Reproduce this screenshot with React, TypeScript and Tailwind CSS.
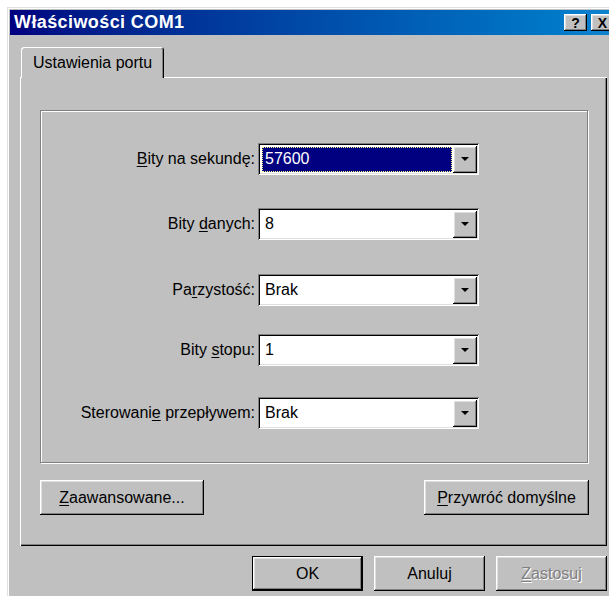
import type { ReactNode } from 'react'

// bevels in the classic 3D look
const raised =
  'shadow-[inset_-1px_-1px_#000,inset_1px_1px_#fff,inset_-2px_-2px_#808080,inset_2px_2px_#dfdfdf]'
const sunken =
  'shadow-[inset_1px_1px_#808080,inset_-1px_-1px_#fff,inset_2px_2px_#000,inset_-2px_-2px_#dfdfdf]'

const font = { fontFamily: '"Liberation Sans", Arial, sans-serif' }

function Key({ children }: { children: ReactNode }) {
  return <span className="underline underline-offset-2 decoration-1">{children}</span>
}

function Arrow() {
  return (
    <svg width="8" height="4" viewBox="0 0 8 4">
      <path d="M0 0h8L4 4z" fill="#000" />
    </svg>
  )
}

function Combo({ value, selected }: { value: string; selected?: boolean }) {
  return (
    <div className={`relative h-[32px] w-[221px] bg-white ${sunken} flex items-center p-[2px]`}>
      <div className="flex-1 h-full flex items-center pl-[2px] pr-[1px]">
        {selected ? (
          <div className="h-[25px] w-full bg-[#000080] border border-dotted border-[#ffff80] text-white flex items-center pl-[2px]">
            {value}
          </div>
        ) : (
          <span className="pl-[3px] text-black">{value}</span>
        )}
      </div>
      <div className={`w-[24px] h-[27px] bg-[#c0c0c0] ${raised} flex items-center justify-center`}>
        <Arrow />
      </div>
    </div>
  )
}

function Row({ label, children, mt }: { label: ReactNode; children: ReactNode; mt: string }) {
  return (
    <div className={`flex items-center ${mt}`}>
      <div className="w-[217px] text-right pr-[3px] text-black">{label}</div>
      {children}
    </div>
  )
}

function Button({
  children,
  w,
  isDefault,
  disabled,
}: {
  children: ReactNode
  w: string
  isDefault?: boolean
  disabled?: boolean
}) {
  const frame = isDefault
    ? 'shadow-[inset_0_0_0_1px_#000,inset_-2px_-2px_#000,inset_2px_2px_#fff,inset_-3px_-3px_#808080,inset_3px_3px_#dfdfdf]'
    : raised
  return (
    <div
      className={`${w} h-[35px] bg-[#c0c0c0] ${frame} flex items-center justify-center ${
        disabled ? 'text-[#808080] [text-shadow:1px_1px_#fff]' : 'text-black'
      }`}
    >
      {children}
    </div>
  )
}

export default function App() {
  return (
    <div className="w-[609px] h-[596px] overflow-hidden bg-white pl-[7px] pt-[7px] text-[16px]" style={font}>
      <div className="w-[613px] h-[600px] bg-[#c0c0c0] shadow-[inset_1px_1px_#dfdfdf,inset_2px_2px_#fff] p-[3px] flex flex-col">
        {/* title bar */}
        <div className="h-[25px] flex items-center bg-linear-to-r from-[#000080] to-[#1084d0] pl-[4px] pr-[3px]">
          <span className="text-white font-bold text-[18px] tracking-[0.4px] flex-1">Właściwości COM1</span>
          <div className={`w-[23px] h-[17px] bg-[#c0c0c0] ${raised} flex items-center justify-center font-bold text-[14px] leading-none text-black`}>
            ?
          </div>
          <div className={`ml-[4px] w-[23px] h-[17px] bg-[#c0c0c0] ${raised} flex items-center justify-center font-bold text-[14px] leading-none text-black`}>
            X
          </div>
        </div>

        <div className="pl-[10px] pt-[12px] w-[597px]">
          {/* tab strip */}
          <div className="flex">
            <div className="relative z-10 ml-[1px] -mb-[1px] h-[31px] w-[143px] rounded-t-[3px] bg-[#c0c0c0] shadow-[inset_1px_1px_#fff,inset_-1px_0_#000,inset_-2px_0_#808080] flex items-center pl-[12px] text-black">
              Ustawienia portu
            </div>
          </div>

          {/* tab page */}
          <div className="h-[469px] w-[587px] bg-[#c0c0c0] shadow-[inset_1px_1px_#fff,inset_-1px_-1px_#000,inset_-2px_-2px_#808080] px-[20px] pt-[33px] flex flex-col">
            <div className="h-[353px] w-[548px] border border-[#808080] shadow-[inset_1px_1px_#fff,1px_1px_#fff] flex flex-col">
              <Row mt="mt-[32px]" label={<><Key>B</Key>ity na sekundę:</>}>
                <Combo value="57600" selected />
              </Row>
              <Row mt="mt-[33px]" label={<>Bity <Key>d</Key>anych:</>}>
                <Combo value="8" />
              </Row>
              <Row mt="mt-[34px]" label={<>Pa<Key>r</Key>zystość:</>}>
                <Combo value="Brak" />
              </Row>
              <Row mt="mt-[28px]" label={<>Bity <Key>s</Key>topu:</>}>
                <Combo value="1" />
              </Row>
              <Row mt="mt-[31px]" label={<>Sterowani<Key>e</Key> przepływem:</>}>
                <Combo value="Brak" />
              </Row>
            </div>

            <div className="mt-[17px] w-[549px] flex justify-between">
              <Button w="w-[164px]">
                <span>
                  <Key>Z</Key>aawansowane...
                </span>
              </Button>
              <Button w="w-[165px]">
                <span>
                  <Key>P</Key>rzywróć domyślne
                </span>
              </Button>
            </div>
          </div>

          {/* dialog buttons */}
          <div className="mt-[10px] w-[587px] flex justify-end gap-[11px]">
            <Button w="w-[111px]" isDefault>
              OK
            </Button>
            <Button w="w-[111px]">Anuluj</Button>
            <Button w="w-[111px]" disabled>
              <span>
                <Key>Z</Key>astosuj
              </span>
            </Button>
          </div>
        </div>
      </div>
    </div>
  )
}
